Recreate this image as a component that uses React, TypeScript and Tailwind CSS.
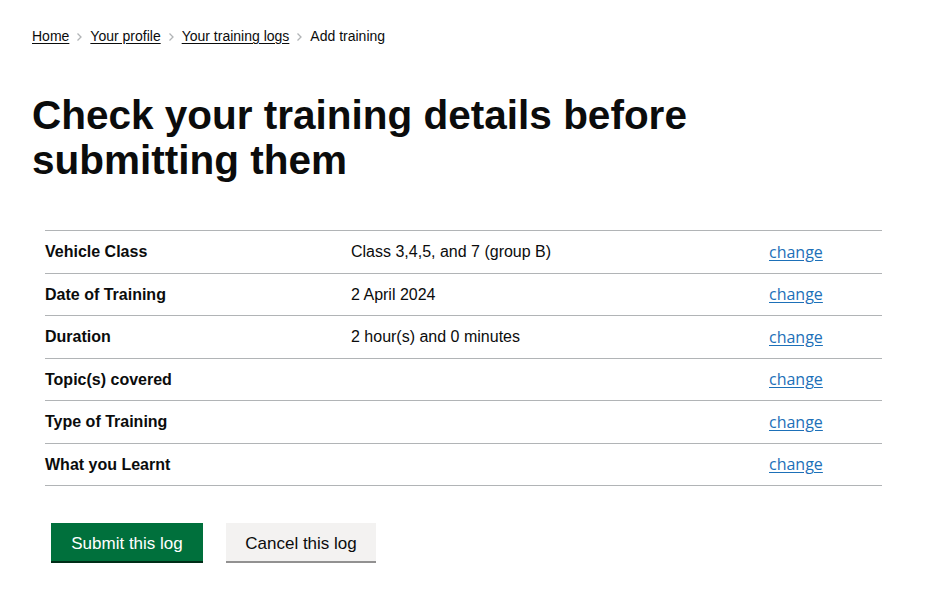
import React from "react";

const rows: { key: string; value: string }[] = [
  { key: "Vehicle Class", value: "Class 3,4,5, and 7 (group B)" },
  { key: "Date of Training", value: "2 April 2024" },
  { key: "Duration", value: "2 hour(s) and 0 minutes" },
  { key: "Topic(s) covered", value: "" },
  { key: "Type of Training", value: "" },
  { key: "What you Learnt", value: "" },
];

function Chevron() {
  return (
    <svg width="7" height="10" viewBox="0 0 7 10" className="mx-[7px] mt-[2px]">
      <path d="M1.5 1.5 L5 5 L1.5 8.5" fill="none" stroke="#b1b4b6" strokeWidth="1.3" />
    </svg>
  );
}

export default function App() {
  return (
    <div
      className="min-h-[593px] w-[925px] bg-white text-[#0b0c0c]"
      style={{ fontFamily: '"Liberation Sans", Arial, sans-serif' }}
    >
      <div className="px-[32px] pt-[27px]">
        <nav className="flex items-center text-[14px] leading-[18px]">
          <a className="underline underline-offset-2" href="#">Home</a>
          <Chevron />
          <a className="underline underline-offset-2" href="#">Your profile</a>
          <Chevron />
          <a className="underline underline-offset-2" href="#">Your training logs</a>
          <Chevron />
          <span>Add training</span>
        </nav>
        <h1 className="mt-[48px] text-[40.5px] font-bold leading-[45px]">
          Check your training details before
          <br />
          submitting them
        </h1>
      </div>
      <div className="ml-[45px] mr-[43px] mt-[47px]">
        <div className="border-t border-[#b1b4b6]">
          {rows.map((r) => (
            <div key={r.key} className="flex h-[42.5px] items-center border-b border-[#b1b4b6] pt-[1px] text-[16px]">
              <div className="w-[306px] font-bold">{r.key}</div>
              <div className="w-[418px]">{r.value}</div>
              <div>
                <a className="text-[#1d70b8] underline underline-offset-2" href="#" style={{ fontFamily: '"Open Sans", sans-serif', fontSize: 16 }}>
                  change
                </a>
              </div>
            </div>
          ))}
        </div>
        <div className="ml-[6px] mt-[37px] flex gap-[23px]">
          <button className="h-[38px] w-[152px] bg-[#00703c] pt-[3px] text-[17px] text-white shadow-[0_2px_0_#002d18]">
            Submit this log
          </button>
          <button className="h-[38px] w-[150px] bg-[#f3f2f1] pt-[3px] text-[17px] text-[#0b0c0c] shadow-[0_2px_0_#929191]">
            Cancel this log
          </button>
        </div>
      </div>
    </div>
  );
}
